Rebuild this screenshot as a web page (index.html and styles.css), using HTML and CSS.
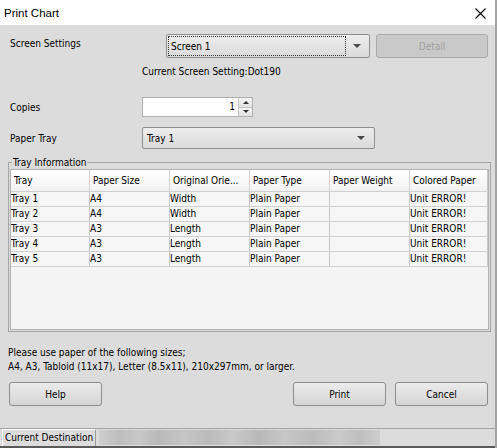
FILE: index.html
```html
<!DOCTYPE html>
<html>
<head>
<meta charset="utf-8">
<title>Print Chart</title>
<link rel="stylesheet" href="styles.css">
</head>
<body>
<div class="window">
  <div class="titlebar">
    <span class="title">Print Chart</span>
    <svg class="close" width="11" height="11" viewBox="0 0 11 11"><path d="M0.5 0.5 L10.5 10.5 M10.5 0.5 L0.5 10.5" stroke="#000" stroke-width="1.1" fill="none"/></svg>
  </div>
  <div class="main">
    <div class="row row-screen">
      <span class="label label-screen">Screen Settings</span>
      <div class="combo combo-screen"><span class="focus">Screen 1</span><span class="arrow"></span></div>
      <button class="btn btn-detail" disabled>Detail</button>
    </div>
    <div class="current">Current Screen Setting:Dot190</div>
    <div class="row row-copies">
      <span class="label label-field">Copies</span>
      <div class="spin">
        <span class="spin-val">1</span>
        <div class="spin-btns"><span class="spin-b"><span class="tri-up"></span></span><span class="spin-b"><span class="tri-down"></span></span></div>
      </div>
    </div>
    <div class="row row-tray">
      <span class="label label-field">Paper Tray</span>
      <div class="combo combo-tray"><span class="val">Tray 1</span><span class="arrow"></span></div>
    </div>
    <div class="group">
      <span class="legend">Tray Information</span>
      <div class="list">
        <div class="lrow lhead">
          <span>Tray</span><span>Paper Size</span><span>Original Orie...</span><span>Paper Type</span><span>Paper Weight</span><span>Colored Paper</span>
        </div>
        <div class="lrow"><span>Tray 1</span><span>A4</span><span>Width</span><span>Plain Paper</span><span></span><span>Unit ERROR!</span></div>
        <div class="lrow"><span>Tray 2</span><span>A4</span><span>Width</span><span>Plain Paper</span><span></span><span>Unit ERROR!</span></div>
        <div class="lrow"><span>Tray 3</span><span>A3</span><span>Length</span><span>Plain Paper</span><span></span><span>Unit ERROR!</span></div>
        <div class="lrow"><span>Tray 4</span><span>A3</span><span>Length</span><span>Plain Paper</span><span></span><span>Unit ERROR!</span></div>
        <div class="lrow"><span>Tray 5</span><span>A3</span><span>Length</span><span>Plain Paper</span><span></span><span>Unit ERROR!</span></div>
      </div>
    </div>
    <p class="note">Please use paper of the following sizes;<br>A4, A3, Tabloid (11x17), Letter (8.5x11), 210x297mm, or larger.</p>
    <div class="buttons">
      <button class="btn">Help</button>
      <span class="spacer"></span>
      <button class="btn">Print</button>
      <button class="btn">Cancel</button>
    </div>
  </div>
  <div class="status">
    <span class="dest">Current Destination</span>
    <span class="blur"></span>
  </div>
</div>
</body>
</html>
```
FILE: styles.css
```css
* { box-sizing: border-box; }
html, body { margin: 0; padding: 0; }
body {
  width: 497px;
  height: 448px;
  overflow: hidden;
  background: #dcdcdc;
  font-family: "DejaVu Sans Condensed", "DejaVu Sans", sans-serif;
  font-size: 10px;
  color: #000;
}
.window {
  width: 497px;
  height: 448px;
  background: #dcdcdc;
  border-right: 2px solid #a4a4a4;
  display: flex;
  flex-direction: column;
}
.titlebar {
  height: 25px;
  flex: none;
  background: #fff;
  display: flex;
  align-items: center;
  justify-content: space-between;
  padding: 0 9px 0 4px;
}
.title {
  font-family: "Liberation Sans", sans-serif;
  font-size: 11.5px;
}
.close { display: block; margin-top: 1px; }
.main {
  flex: 1;
  display: flex;
  flex-direction: column;
  padding: 9px 0 0 8px;
}
.row { display: flex; flex: none; }
.label { padding-left: 2px; line-height: 13px; }
.label-screen { width: 158px; padding-top: 3px; }
.label-field { width: 134px; align-self: center; }
.row-screen { height: 24px; }
.combo {
  position: relative;
  height: 100%;
  border: 1px solid #8e8e8e;
  border-radius: 2px;
  background: linear-gradient(#eeeeee, #dadada);
  display: flex;
  align-items: center;
}
.combo-screen { width: 204px; padding: 1px; }
.focus {
  width: 178px;
  height: 100%;
  border: 1px dotted #333;
  display: flex;
  align-items: center;
  padding-left: 2px;
}
.arrow {
  position: absolute;
  right: 8px;
  top: 50%;
  margin-top: -2px;
  width: 0; height: 0;
  border-left: 4px solid transparent;
  border-right: 4px solid transparent;
  border-top: 4px solid #4a4a4a;
}
.combo-tray .arrow { right: 9px; }
.btn {
  width: 93px;
  height: 24px;
  border: 1px solid #8c8c8c;
  border-radius: 3px;
  background: linear-gradient(#ebebeb, #d5d5d5);
  font: inherit;
  color: #000;
  padding: 0;
}
.btn-detail {
  width: 112px;
  margin-left: 6px;
  background: #c9c9c9;
  border-color: #a9a9a9;
  color: #a0a0a0;
}
.current {
  margin-top: 7px;
  padding-left: 134px;
  line-height: 14px;
}
.row-copies { margin-top: 18px; height: 20px; }
.spin {
  width: 111px;
  height: 20px;
  background: #fff;
  border: 1px solid #b0b0b0;
  display: flex;
}
.spin-val { flex: 1; text-align: right; padding-right: 3px; line-height: 18px; }
.spin-btns { width: 14px; display: flex; flex-direction: column; border-left: 1px solid #c4c4c4; }
.spin-b {
  flex: 1;
  background: linear-gradient(#f4f4f4, #e2e2e2);
  border-bottom: 1px solid #c4c4c4;
  display: flex;
  align-items: center;
  justify-content: center;
}
.spin-b:last-child { border-bottom: none; }
.tri-up, .tri-down {
  width: 0; height: 0;
  border-left: 3px solid transparent;
  border-right: 3px solid transparent;
}
.tri-up { border-bottom: 3px solid #333; }
.tri-down { border-top: 3px solid #333; }
.row-tray { margin-top: 10px; height: 22px; }
.combo-tray { width: 233px; }
.combo-tray .val { padding-left: 4px; }
.group {
  position: relative;
  margin-top: 13px;
  width: 483px;
  height: 170px;
  border: 1px solid #a6a6a6;
  padding: 6px 1px 0 1px;
  flex: none;
}
.legend {
  position: absolute;
  left: 3px;
  top: -7px;
  padding: 0 1px;
  background: #dcdcdc;
  line-height: 13px;
}
.list {
  width: 479px;
  height: 161px;
  border: 1px solid #b2b2b2;
  background: #f4f4f4;
}
.lrow {
  display: grid;
  grid-template-columns: 79px 80px 80px 80px 80px 78px;
  height: 15px;
  line-height: 14px;
  border-bottom: 1px solid #d0d0d0;
  background: #f6f6f6;
}
.lrow span {
  border-right: 1px solid #c8c8c8;
  white-space: nowrap;
  overflow: hidden;
  padding-left: 0;
}
.lrow span:first-child { padding-left: 0; }
.lhead {
  height: 22px;
  line-height: 21px;
  background: linear-gradient(#ffffff, #f2f2f2);
  border-bottom: 1px solid #cfcfcf;
}
.lhead span { padding-left: 3px; border-right-color: #d4d4d4; }
.lhead span:first-child { padding-left: 3px; }
.lrow span:last-child { border-right: 1px solid #c8c8c8; }
.note {
  margin: 14px 0 0 0;
  line-height: 14px;
}
.buttons {
  margin-top: 8px;
  display: flex;
  padding-left: 1px;
  width: 480px;
}
.spacer { flex: 1; }
.buttons .btn + .btn { margin-left: 9px; }
.status {
  flex: none;
  height: 20px;
  border-top: 1px solid #a3a3a3;
  border-bottom: 2px solid #5a5a5a;
  display: flex;
  align-items: stretch;
  padding: 0 0 0 2px;
}
.dest {
  width: 94px;
  border-top: 1px solid #fff;
  border-left: 1px solid #fff;
  border-right: 1px solid #9a9a9a;
  padding-left: 2px;
  line-height: 15px;
}
.blur {
  width: 281px;
  margin: 1px 0 1px 3px;
  background: linear-gradient(90deg, #cfcfcf 0px, #bdbdbd 20px, #c8c8c8 40px, #b9b9b9 60px, #c6c6c6 85px, #bbbbbb 110px, #c9c9c9 135px, #b8b8b8 160px, #c7c7c7 185px, #bcbcbc 215px, #cacaca 240px, #bfbfbf 260px, #cdcdcd 281px);
}
```
